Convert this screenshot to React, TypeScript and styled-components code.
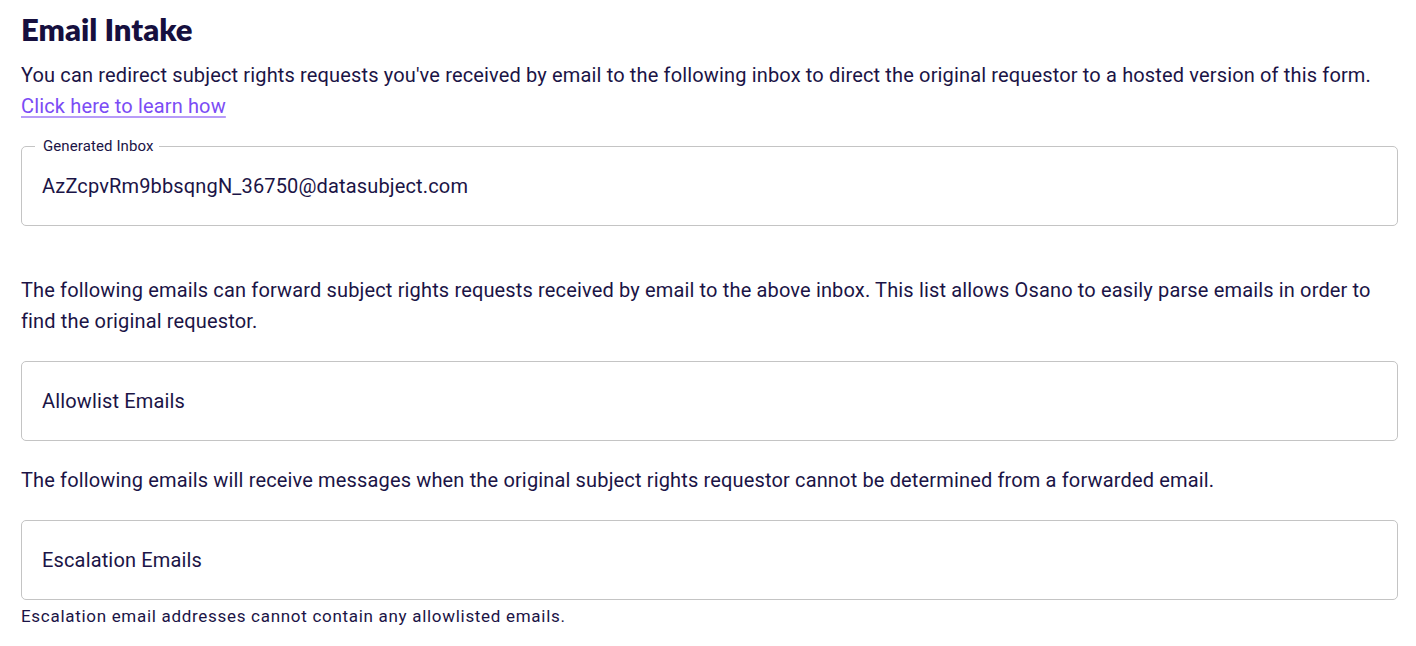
import React from 'react';
import styled, { createGlobalStyle } from 'styled-components';

const ink = '#1b1446';

const GlobalStyle = createGlobalStyle`
  html, body {
    margin: 0;
    padding: 0;
    background: #ffffff;
  }
  body {
    font-family: Roboto, "Liberation Sans", Arial, sans-serif;
    color: ${ink};
  }
`;

const Page = styled.div`
  padding: 11px 18px 20px 21px;
  display: flex;
  flex-direction: column;
`;

const Title = styled.h1`
  margin: 0;
  font-family: Lato, "Noto Sans", sans-serif;
  font-weight: 800;
  font-size: 31px;
  line-height: 36px;
  color: #160f3e;
`;

const Text = styled.p<{ $top?: number }>`
  margin: ${p => p.$top ?? 0}px 0 0;
  font-size: 20px;
  line-height: 31px;
  letter-spacing: 0.15px;
  color: ${ink};
`;

const Link = styled.a`
  display: inline-block;
  color: #7b4cf5;
  text-decoration: underline;
  text-decoration-color: #b79cf8;
  text-underline-offset: 3px;
  cursor: pointer;
`;

const Outlined = styled.div<{ $top: number }>`
  position: relative;
  margin-top: ${p => p.$top}px;
  height: 80px;
  box-sizing: border-box;
  padding: 0 20px;
  border: 1px solid #c4c4c4;
  border-radius: 5px;
  display: flex;
  align-items: center;
`;

const FloatLabel = styled.span`
  position: absolute;
  top: -10px;
  left: 13px;
  padding: 0 5px 0 8px;
  background: #ffffff;
  font-size: 15px;
  line-height: 18px;
  letter-spacing: 0.1px;
  color: ${ink};
`;

const Value = styled.span`
  font-size: 20px;
  line-height: 24px;
  letter-spacing: 0.15px;
  color: ${ink};
`;

const Helper = styled.div`
  margin-top: 5px;
  font-size: 17px;
  line-height: 22px;
  letter-spacing: 0.7px;
  color: ${ink};
`;

export default function App() {
  return (
    <>
      <GlobalStyle />
      <Page>
        <Title>Email Intake</Title>
        <Text $top={13}>
          You can redirect subject rights requests you've received by email to the following inbox to direct the
          original requestor to a hosted version of this form. <Link>Click here to learn how</Link>
        </Text>
        <Outlined $top={24}>
          <FloatLabel>Generated Inbox</FloatLabel>
          <Value>AzZcpvRm9bbsqngN_36750@datasubject.com</Value>
        </Outlined>
        <Text $top={49}>
          The following emails can forward subject rights requests received by email to the above inbox. This list
          allows Osano to easily parse emails in order to find the original requestor.
        </Text>
        <Outlined $top={24}>
          <Value>Allowlist Emails</Value>
        </Outlined>
        <Text $top={24}>
          The following emails will receive messages when the original subject rights requestor cannot be determined
          from a forwarded email.
        </Text>
        <Outlined $top={24}>
          <Value>Escalation Emails</Value>
        </Outlined>
        <Helper>Escalation email addresses cannot contain any allowlisted emails.</Helper>
      </Page>
    </>
  );
}
